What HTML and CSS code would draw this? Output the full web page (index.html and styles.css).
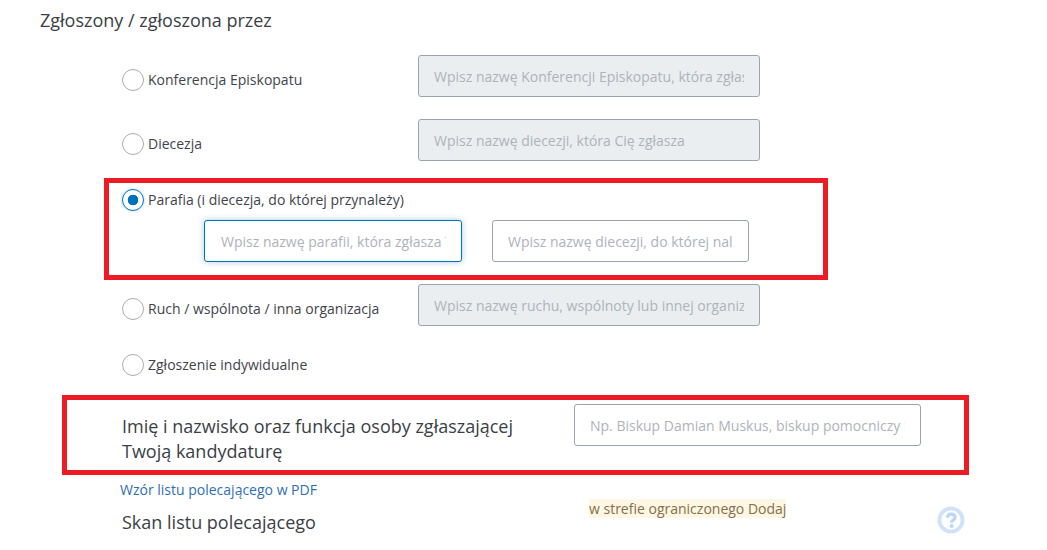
FILE: index.html
```html
<!DOCTYPE html>
<html lang="pl">
<head>
<meta charset="utf-8">
<title>Zgłoszony / zgłoszona przez</title>
<link rel="stylesheet" href="styles.css">
</head>
<body>
<main class="page">
  <h2 class="title">Zgłoszony / zgłoszona przez</h2>

  <div class="row row-one">
    <label class="choice"><span class="radio"></span><span class="choice-text">Konferencja Episkopatu</span></label>
    <input class="field field-wide" disabled placeholder="Wpisz nazwę Konferencji Episkopatu, która zgłasza Cię">
  </div>

  <div class="row row-two">
    <label class="choice"><span class="radio"></span><span class="choice-text">Diecezja</span></label>
    <input class="field field-wide" disabled placeholder="Wpisz nazwę diecezji, która Cię zgłasza">
  </div>

  <section class="mark mark-parish">
    <label class="choice"><span class="radio radio-on"></span><span class="choice-text">Parafia (i diecezja, do której przynależy)</span></label>
    <div class="parish-fields">
      <input class="field field-focus" placeholder="Wpisz nazwę parafii, która zgłasza Twoją kandydaturę">
      <input class="field field-diocese" placeholder="Wpisz nazwę diecezji, do której należy parafia">
    </div>
  </section>

  <div class="row row-four">
    <label class="choice"><span class="radio"></span><span class="choice-text">Ruch / wspólnota / inna organizacja</span></label>
    <input class="field field-wide" disabled placeholder="Wpisz nazwę ruchu, wspólnoty lub innej organizacji">
  </div>

  <div class="row row-five">
    <label class="choice"><span class="radio"></span><span class="choice-text">Zgłoszenie indywidualne</span></label>
  </div>

  <section class="mark mark-person">
    <p class="person-label">Imię i nazwisko oraz funkcja osoby zgłaszającej Twoją kandydaturę</p>
    <input class="field field-person" placeholder="Np. Biskup Damian Muskus, biskup pomocniczy krakowski">
  </section>

  <div class="foot">
    <div class="foot-left">
      <a class="pdf-link" href="#">Wzór listu polecającego w PDF</a>
      <h3 class="scan-title">Skan listu polecającego</h3>
    </div>
    <span class="notice">w strefie ograniczonego Dodaj</span>
    <svg class="help" viewBox="0 0 28 28" width="28" height="28" aria-hidden="true">
      <circle cx="14" cy="14" r="11.6" fill="none" stroke="#cfe2fa" stroke-width="3.8"/>
      <path d="M10.4 11.8c.1-2.4 1.7-3.6 3.8-3.6 2.3 0 3.8 1.3 3.8 3.1 0 1.5-.9 2.2-1.9 2.9-.9.6-1.4 1-1.4 2v.5" fill="none" stroke="#bcd6f7" stroke-width="3.2"/>
      <circle cx="14.6" cy="20" r="2" fill="#bcd6f7"/>
    </svg>
  </div>
</main>
</body>
</html>
```
FILE: styles.css
```css
html, body {
  margin: 0;
  padding: 0;
  background: #fff;
}
body {
  font-family: "Open Sans", "Liberation Sans", sans-serif;
  color: #3a3f47;
  overflow: hidden;
}
.page {
  width: 1047px;
  height: 550px;
  overflow: hidden;
}
.title {
  margin: 0 0 0 40px;
  padding-top: 8px;
  height: 46px;
  box-sizing: border-box;
  font-size: 18px;
  line-height: 24px;
  font-weight: 400;
  color: #3a3f47;
}
.row {
  display: flex;
  align-items: center;
  height: 42px;
  margin-left: 122px;
}
.row-one { margin-top: 9px; }
.row-two { margin-top: 22px; }
.row-four { margin-top: 4px; }
.row-five { margin-top: 18px; }
.row .choice { width: 296px; flex: none; }
.row-one .choice, .row-two .choice { padding-top: 8px; }
.row-four .choice { padding-top: 8px; }
.choice {
  display: flex;
  align-items: center;
  gap: 4px;
  font-size: 14px;
  line-height: 22px;
  color: #3f444c;
}
.radio {
  width: 22px;
  height: 22px;
  box-sizing: border-box;
  flex: none;
  border: 1px solid #a9adb3;
  border-radius: 50%;
  background: #fff;
}
.radio-on {
  border-color: #0071bc;
  box-shadow: 0 0 3px rgba(0, 113, 188, .35);
  background: radial-gradient(circle, #0071bc 0, #0071bc 5px, #fff 5.6px);
}
.field {
  height: 42px;
  box-sizing: border-box;
  padding: 0 15px;
  border: 1px solid #9aa3b2;
  border-radius: 3px;
  background: #fff;
  font-family: inherit;
  font-size: 14px;
  color: #3f444c;
  outline: none;
  flex: none;
}
.field::placeholder {
  color: #aeb3bb;
  opacity: 1;
}
.field:disabled {
  background: #ebeef0;
}
.field-wide { width: 342px; }
.field-focus {
  width: 258px;
  padding: 0 15px 0 16px;
  border-color: #0071bc;
  box-shadow: 0 0 6px rgba(0, 113, 188, .35);
}
.field-diocese { width: 257px; }
.mark {
  box-sizing: border-box;
  border: 5px solid #ed1c24;
}
.mark-parish {
  width: 724px;
  height: 102px;
  margin: 17px 0 0 104px;
  padding: 6px 0 0 13px;
}
.parish-fields {
  display: flex;
  gap: 30px;
  margin: 9px 0 0 82px;
}
.mark-person {
  display: flex;
  align-items: flex-start;
  width: 907px;
  height: 80px;
  margin: 9px 0 0 62px;
  padding: 4px 0 0 55px;
}
.person-label {
  width: 452px;
  flex: none;
  box-sizing: border-box;
  margin: 0;
  padding: 10px 40px 0 0;
  font-size: 18px;
  line-height: 25px;
  color: #3a3f47;
}
.field-person { width: 347px; }
.foot {
  display: flex;
  align-items: flex-start;
  margin-left: 120px;
}
.foot-left {
  width: 469px;
  flex: none;
  padding-top: 5px;
}
.pdf-link {
  display: block;
  font-size: 14px;
  line-height: 20px;
  color: #2f6fb5;
  text-decoration: none;
}
.scan-title {
  margin: 10px 0 0 2px;
  font-size: 18px;
  line-height: 25px;
  font-weight: 400;
  color: #3a3f47;
}
.notice {
  margin-top: 24px;
  height: 19px;
  font-size: 14px;
  line-height: 19px;
  color: #8a6d4b;
  background: #fcf8e3;
  white-space: nowrap;
}
.help {
  flex: none;
  margin: 31px 0 0 151px;
}
```
